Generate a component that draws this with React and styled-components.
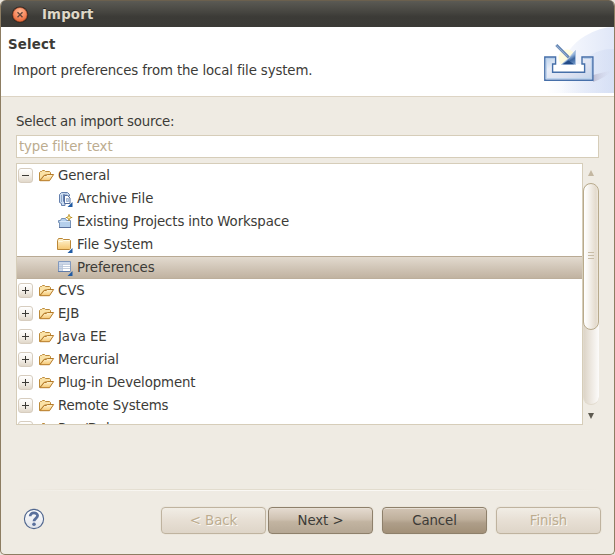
import React from 'react';
import styled, { createGlobalStyle } from 'styled-components';

const Global = createGlobalStyle`
  * { box-sizing: border-box; }
  body { margin: 0; background: #e9e5dc; overflow: hidden; }
  button, input { font: inherit; color: inherit; letter-spacing: inherit; }
  svg { display: block; flex: none; }
`;

const Window = styled.div`
  display: flex;
  flex-direction: column;
  width: 615px;
  height: 555px;
  border: solid #8d7d62;
  border-width: 0 1px 1px;
  border-radius: 6px 6px 5px 5px;
  background: #efebe3;
  overflow: hidden;
  color: #3c3b37;
  font: 13.33px/23px 'DejaVu Sans', sans-serif;
  letter-spacing: -0.08px;
  white-space: nowrap;
`;

const TitleBar = styled.header`
  display: flex;
  align-items: center;
  gap: 13px;
  height: 27px;
  flex: none;
  padding: 1px 0 0 10px;
  border-top: 1px solid #6b604e;
  background: linear-gradient(#5b5a54, #45443f 45%, #3c3b37 60%, #3b3a36);
  color: #dfd8c8;
  font-weight: bold;
  letter-spacing: 0.16px;
  text-shadow: 0 -1px 0 #2a2926;
`;

const Banner = styled.section`
  display: flex;
  justify-content: space-between;
  height: 70px;
  flex: none;
  background: #fff;
  border-bottom: 1px solid #ddd4c4;
`;

const BannerText = styled.div`
  padding: 6px 0 0 7px;
`;

const Heading = styled.h1`
  margin: 0;
  font-size: 13.33px;
  line-height: 24px;
  letter-spacing: 0.16px;
`;

const Description = styled.p`
  margin: 2px 0 0 5px;
  line-height: 24px;
  letter-spacing: -0.13px;
`;

const Content = styled.main`
  display: flex;
  flex-direction: column;
  padding: 13px 0 0 15px;
  height: 392px;
  flex: none;
`;

const Label = styled.label`
  height: 25px;
  line-height: 23px;
  letter-spacing: -0.2px;
`;

const Filter = styled.input`
  width: 583px;
  height: 23px;
  padding: 0 2px 1px;
  border: 1px solid #d6cdb9;
  border-radius: 0;
  background: #fff;
  outline: none;
  letter-spacing: -0.13px;
  &::placeholder { color: #bcac8f; opacity: 1; }
`;

const TreeArea = styled.div`
  display: flex;
  margin-top: 5px;
`;

const Tree = styled.ul`
  width: 567px;
  height: 262px;
  margin: 0;
  padding: 0;
  list-style: none;
  overflow: hidden;
  background: #fff;
  border: 1px solid #d6cdb9;
`;

const Row = styled.li`
  display: flex;
  align-items: center;
  height: 23px;
  padding-left: ${p => (p.$child ? 40 : 1)}px;
  background: ${p => (p.$selected ? 'linear-gradient(#e4dcd1, #d3c8ba 45%, #bfb19f)' : 'none')};
  box-shadow: ${p => (p.$selected ? 'inset 0 1px #b9aa94, inset 0 -1px #bcae9b' : 'none')};
`;

const RowText = styled.span`
  margin-left: ${p => (p.$child ? 4 : 3)}px;
  letter-spacing: ${p => p.$tracking}px;
`;

const Expander = styled.button`
  display: grid;
  place-items: center;
  width: 15px;
  height: 15px;
  margin-right: 6px;
  padding: 0;
  border: 1px solid #d7cdbf;
  border-radius: 3px;
  background: linear-gradient(#fff, #f5f1eb 50%, #e1d8ca);
`;

const Scrollbar = styled.div`
  display: flex;
  flex-direction: column;
  align-items: center;
  width: 16px;
  height: 262px;
`;

const ScrollArrow = styled.div`
  display: grid;
  place-items: center;
  width: 16px;
  height: 20px;
  padding-top: ${p => (p.$down ? 2 : 0)}px;
`;

const Trough = styled.div`
  width: 16px;
  height: 222px;
  border-radius: 8px;
  border: 1px solid #e1dacd;
  border-width: 0 0 1px 1px;
  background: linear-gradient(90deg, #ddd5c8, #eee9e2 50%, #fcfbfa);
`;

const Thumb = styled.div`
  display: flex;
  flex-direction: column;
  align-items: center;
  justify-content: center;
  gap: 2px;
  width: 16px;
  height: 147px;
  margin-left: -1px;
  padding-bottom: 2px;
  border: 1px solid #b8aa8c;
  border-radius: 8px;
  background: linear-gradient(90deg, #fff, #f9f7f4 25%, #e4dbcd 85%, #eee7dc);
`;

const Grip = styled.span`
  width: 6px;
  height: 1px;
  background: #c8bca6;
`;

const Separator = styled.div`
  height: 2px;
  flex: none;
  margin: 0 14px 0 15px;
  background:
    linear-gradient(90deg, transparent, #e2dcce 25%, #e2dcce 75%, transparent) 0 0 / 100% 1px no-repeat,
    linear-gradient(90deg, transparent, #faf8f4 25%, #faf8f4 75%, transparent) 0 1px / 100% 1px no-repeat;
`;

const Footer = styled.footer`
  display: flex;
  align-items: flex-start;
  height: 62px;
  padding: 16px 13px 0 22px;
`;

const HelpButton = styled.button`
  width: 22px;
  height: 22px;
  padding: 0;
  margin: 1px auto 0 0;
  border: 0;
  background: none;
`;

const looks = {
  normal: 'linear-gradient(#e5dbd0, #cfc2b2 45%, #c2b4a1 55%, #b5a794)',
  strong: 'linear-gradient(#d2c4b4, #bfb09c 45%, #ae9e89 60%, #a29078)',
  disabled: 'linear-gradient(#f1ede5, #e7dfd4 50%, #ded5c8)',
};

const Button = styled.button`
  width: 105px;
  height: 27px;
  margin-left: ${p => p.$gap}px;
  padding: 0;
  line-height: 25px;
  border: 1px solid ${p => (p.disabled ? '#bfb39f' : '#8e806b')};
  border-radius: 4px;
  background: ${p => looks[p.$look]};
  color: ${p => (p.disabled ? '#bcac8f' : '#3c3b37')};
  text-shadow: ${p => (p.disabled ? '1px 1px 0 #fcfaf6' : 'none')};
  box-shadow: 0 0 0 1px #ebe6dc, 0 1px 0 #f8f5f0${p => (p.disabled ? '' : ', inset 0 1px #e6ded3')};
`;

const CloseIcon = () => (
  <svg width="18" height="18" viewBox="0 0 18 18">
    <defs>
      <radialGradient id="close" cx=".5" cy=".28" r=".75">
        <stop offset="0" stopColor="#ffb892" />
        <stop offset=".55" stopColor="#f78a60" />
        <stop offset="1" stopColor="#e0602f" />
      </radialGradient>
    </defs>
    <circle cx="9" cy="8.7" r="8.3" fill="#2b2925" />
    <circle cx="9" cy="8.7" r="7.2" fill="url(#close)" stroke="#8b3d22" strokeWidth=".6" />
    <path d="M6.5 6.2l5 5M11.5 6.2l-5 5" stroke="#64463a" strokeWidth="1.4" />
  </svg>
);

const ImportIcon = () => (
  <svg width="84" height="66" viewBox="0 0 84 66">
    <defs>
      <linearGradient id="glow" x1="0" x2="1">
        <stop offset=".2" stopColor="#fff" />
        <stop offset="1" stopColor="#e0e7f8" />
      </linearGradient>
      <linearGradient id="wave" x1="0" x2="1">
        <stop offset=".1" stopColor="#d7e0f5" stopOpacity="0" />
        <stop offset="1" stopColor="#d3ddf4" stopOpacity=".7" />
      </linearGradient>
      <linearGradient id="tray" x1="0" x2="1" y2="1">
        <stop offset="0" stopColor="#b9d0ea" />
        <stop offset=".3" stopColor="#e9eef8" />
        <stop offset=".65" stopColor="#dce1f1" />
        <stop offset="1" stopColor="#c0d3eb" />
      </linearGradient>
      <linearGradient id="shade" x1="0" x2="1">
        <stop offset="0" stopColor="#9b94ae" stopOpacity=".5" />
        <stop offset="1" stopColor="#dadff1" stopOpacity="0" />
      </linearGradient>
      <linearGradient id="head" x1=".2" x2=".8" y2="1">
        <stop offset="0" stopColor="#dce9f6" />
        <stop offset=".5" stopColor="#91b2da" />
        <stop offset=".72" stopColor="#3b659f" />
        <stop offset="1" stopColor="#6a91c3" />
      </linearGradient>
    </defs>
    <path d="M0 66C24 62 29 24 55 9Q70 0 84 0V66Z" fill="url(#glow)" />
    <path d="M25 66C43 54 49 21 84 22V66Z" fill="url(#wave)" />
    <path d="M63 48L83 43Q75 51 63 55Z" fill="url(#shade)" />
    <circle cx="37" cy="31" r="8.5" fill="#fffbd6" opacity=".8" />
    <path d="M22.6 37H54.6V45.2H22.6Z" fill="#fff" />
    <path d="M14.8 30H25.6V37H22.6V45.2H54.6V37H52V30H62.9V53.2H14.8Z" fill="url(#tray)" stroke="#466fa9" strokeWidth="1.4" />
    <path d="M16.3 52V31.5H24M53.5 31.5H61.4V51.7H17" fill="none" stroke="#b7cfeb" strokeWidth="1" />
    <path d="M26.3 18l12.5 12.5" stroke="#6687b4" strokeWidth="2.8" />
    <path d="M26.3 18.5l11 11" stroke="#9fb7d6" strokeWidth="1" />
    <path d="M45.5 23.5V37.5H31.5L38 32Z" fill="url(#head)" stroke="#a9c0e0" strokeWidth=".8" />
    <path d="M38.5 33.5l5.5 3.7H33Z" fill="#234b87" />
  </svg>
);

const Folder = () => (
  <svg width="16" height="16" viewBox="0 0 16 16">
    <defs>
      <linearGradient id="folder" x2="0" y2="1">
        <stop offset="0" stopColor="#fff5d5" />
        <stop offset="1" stopColor="#f5c66f" />
      </linearGradient>
    </defs>
    <path d="M.5 12.5V4.5L1.5 3.5H2.5L3.5 2.5H5.5L6.5 3.5H10.5L11.5 4.5V6.5L5.5 7Z" fill="#fbe2a6" stroke="#bd8b3b" />
    <path d="M1 12.7L5.2 7.5H7.2L8.5 6.5H14.6L10.5 12.7H1Z" fill="url(#folder)" stroke="#b57a28" />
  </svg>
);

const Corner = () => <path d="M15.5 11v5h-5Z" fill="#205ba4" />;

const childIcons = {
  archive: (
    <>
      <path d="M4.5 1.5H10.5L12.5 3.5V5H7.5V3.5H6.5V10.5H8V14.5H4.5V12.5L2.5 11.5V3.5Z" fill="#cbdcf0" stroke="#6480ae" />
      <path d="M4.5 4v7M9 2.5v1.5" stroke="#8fa8cc" />
      <path d="M7.5 4.5h3l2.5 2.5v5.5h-5.5Z" fill="#fff" stroke="#526d9d" />
      <path d="M9.5 7.5h2v3h-2Z" fill="#c5d5ea" stroke="#8aa2c6" strokeWidth=".7" />
      <Corner />
    </>
  ),
  project: (
    <>
      <path d="M1.5 6.5h2L4.5 4.5h4l1 2h4v7H2.5V8.5h-1Z" fill="#b5cfeb" stroke="#7792b8" />
      <path d="M3 7.5h10" stroke="#d8e7f8" />
      <path d="M2 13.5h12" stroke="#5a719c" />
      <path d="M12 .3v6.4M8.8 3.5h6.4" stroke="#b88a1c" strokeWidth="1.2" />
      <path d="M10 3.5l2-2 2 2-2 2Z" fill="#fff2a1" stroke="#b58a28" />
    </>
  ),
  folder: (
    <>
      <path d="M.5 12.5V3.5L1.5 1.5H5.5L6.5 2.5H12.5L13.5 3.5V11.5L12.5 12.5Z" fill="url(#folder)" stroke="#bb8737" />
      <path d="M1.5 4.5h4l1-1h6" stroke="#fffbe5" fill="none" />
      <Corner />
    </>
  ),
  table: (
    <>
      <path d="M1.5 1.5h12v10h-12Z" fill="#fff" stroke="#8198bd" />
      <path d="M2 2h11v2H2ZM2 5h3v6H2Z" fill="#ccd7e8" />
      <path d="M2 4.5h11M2 6.5h11M2 8.5h11M5.5 4v7" stroke="#b4c1d7" strokeWidth=".8" />
      <path d="M1 11.5h12" stroke="#5f7ba9" />
      <Corner />
    </>
  ),
};

const ChildIcon = ({ kind }) => (
  <svg width="16" height="16" viewBox="0 0 16 16">{childIcons[kind]}</svg>
);

const HelpIcon = () => (
  <svg width="22" height="22" viewBox="0 0 22 22">
    <defs>
      <linearGradient id="help" x2="0" y2="1">
        <stop offset="0" stopColor="#fff" />
        <stop offset="1" stopColor="#e0e3ea" />
      </linearGradient>
    </defs>
    <circle cx="11" cy="11" r="9.6" fill="url(#help)" stroke="#4f658e" strokeWidth="1.1" />
    <path d="M7.2 8.3C7 3.7 14.7 3.8 14.6 7.8C14.5 10.3 11 10.3 11 13.2" fill="none" stroke="#596f9c" strokeWidth="2.8" />
    <circle cx="11" cy="16.3" r="1.8" fill="#596f9c" />
  </svg>
);

const rows = [
  { text: 'General', open: true },
  { text: 'Archive File', icon: 'archive', tracking: 0 },
  { text: 'Existing Projects into Workspace', icon: 'project', tracking: -0.14 },
  { text: 'File System', icon: 'folder', tracking: 0 },
  { text: 'Preferences', icon: 'table', selected: true },
  { text: 'CVS' },
  { text: 'EJB' },
  { text: 'Java EE' },
  { text: 'Mercurial' },
  { text: 'Plug-in Development', tracking: -0.11 },
  { text: 'Remote Systems', tracking: -0.14 },
  { text: 'Run/Debug' },
];

const TreeRow = ({ text, icon, open, selected, tracking = -0.08 }) => (
  <Row $child={!!icon} $selected={selected}>
    {icon ? (
      <ChildIcon kind={icon} />
    ) : (
      <>
        <Expander aria-label={open ? 'Collapse' : 'Expand'}>
          <svg width="7" height="7" viewBox="0 0 7 7">
            <path d={open ? 'M0 3.5h7' : 'M0 3.5h7M3.5 0v7'} stroke="#3c3b37" />
          </svg>
        </Expander>
        <Folder />
      </>
    )}
    <RowText $child={!!icon} $tracking={tracking}>{text}</RowText>
  </Row>
);

export default function App() {
  return (
    <>
      <Global />
      <Window>
        <TitleBar>
          <CloseIcon />
          <span>Import</span>
        </TitleBar>
        <Banner>
          <BannerText>
            <Heading>Select</Heading>
            <Description>Import preferences from the local file system.</Description>
          </BannerText>
          <ImportIcon />
        </Banner>
        <Content>
          <Label htmlFor="filter">Select an import source:</Label>
          <Filter id="filter" placeholder="type filter text" />
          <TreeArea>
            <Tree>
              {rows.map(row => <TreeRow key={row.text} {...row} />)}
            </Tree>
            <Scrollbar>
              <ScrollArrow>
                <svg width="6" height="6" viewBox="0 0 6 6"><path d="M3 0l3 6H0Z" fill="#c3b7a1" /></svg>
              </ScrollArrow>
              <Trough>
                <Thumb><Grip /><Grip /><Grip /></Thumb>
              </Trough>
              <ScrollArrow $down>
                <svg width="6" height="6" viewBox="0 0 6 6"><path d="M0 0h6L3 6Z" fill="#5d5a50" /></svg>
              </ScrollArrow>
            </Scrollbar>
          </TreeArea>
        </Content>
        <Separator />
        <Footer>
          <HelpButton aria-label="Help"><HelpIcon /></HelpButton>
          <Button disabled $look="disabled" $gap={0}>&lt; Back</Button>
          <Button $look="normal" $gap={2}>Next &gt;</Button>
          <Button $look="strong" $gap={9}>Cancel</Button>
          <Button disabled $look="disabled" $gap={9}>Finish</Button>
        </Footer>
      </Window>
    </>
  );
}
